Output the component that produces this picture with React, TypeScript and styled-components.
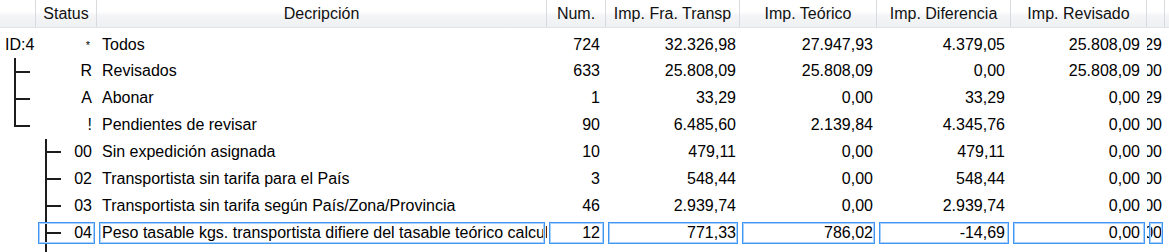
import styled, { createGlobalStyle, css } from "styled-components";

const ROW = 26.85;
const COLS = "36px 61px 450px 59px 134px 137px 134px 136px 18px 1fr";

const GlobalStyle = createGlobalStyle`
  html, body {
    margin: 0;
    padding: 0;
    overflow: hidden;
    background: #ffffff;
  }
  body {
    font-family: "Liberation Sans", Arial, sans-serif;
    font-size: 16px;
    color: #000000;
  }
`;

const Table = styled.div`
  width: 1169px;
  height: 252px;
  overflow: hidden;
  background: #ffffff;
`;

const HeaderRow = styled.div`
  display: grid;
  grid-template-columns: ${COLS};
  height: 28px;
  background: linear-gradient(
    to bottom,
    #ffffff 0%,
    #ffffff 42%,
    #f4f5f7 58%,
    #eff0f2 100%
  );
  border-bottom: 1px solid #e3e4e7;
  box-sizing: border-box;
`;

const HeaderCell = styled.div`
  display: flex;
  align-items: center;
  justify-content: center;
  border-right: 1px solid #dadbde;
  white-space: nowrap;
  overflow: hidden;
  color: #111;

  &:last-child {
    border-right: none;
  }
`;

const Body = styled.div`
  padding-top: 3.6px;
`;

const Row = styled.div`
  display: grid;
  grid-template-columns: ${COLS};
  height: ${ROW}px;
  line-height: ${ROW}px;
`;

type Branch = "tee" | "elbow" | "line";

const lineColor = "#1c1c1c";

const branchBg = (b: Branch, reach: number) => {
  if (b === "tee")
    return css`
      background: linear-gradient(${lineColor}, ${lineColor}) 0 0 / 2px 100%
          no-repeat,
        linear-gradient(${lineColor}, ${lineColor}) 0 50% / ${reach}px 2px
          no-repeat;
    `;
  if (b === "elbow")
    return css`
      background: linear-gradient(${lineColor}, ${lineColor}) 0 0 / 2px
          calc(50% + 1px) no-repeat,
        linear-gradient(${lineColor}, ${lineColor}) 0 50% / ${reach}px 2px
          no-repeat;
    `;
  return css`
    background: linear-gradient(${lineColor}, ${lineColor}) 0 0 / 2px 100%
      no-repeat;
  `;
};

const Connector = styled.span<{ $branch: Branch; $left: number }>`
  flex: none;
  width: 16px;
  margin-left: ${(p) => p.$left}px;
  ${(p) => branchBg(p.$branch, 16)}
`;

const Cell = styled.div<{
  $align?: "left" | "right";
  $pad?: number;
  $selected?: boolean;
}>`
  position: relative;
  display: flex;
  justify-content: ${(p) => (p.$align === "right" ? "flex-end" : "flex-start")};
  padding: ${(p) =>
    p.$align === "right" ? `0 ${p.$pad ?? 5}px 0 0` : "0 0 0 5px"};
  white-space: nowrap;
  overflow: hidden;
  min-width: 0;

  ${(p) =>
    p.$selected &&
    css`
      &::after {
        content: "";
        position: absolute;
        inset: 2px;
        border: 1px solid #3f97f3;
        box-shadow: inset 0 0 0 1px #a9d0f8;
        pointer-events: none;
      }
    `}
`;

const TreeCell = styled.div`
  display: flex;
  align-items: stretch;
  padding-left: 5px;
  white-space: nowrap;
  overflow: hidden;
`;

const StatusCell = styled(Cell)`
  padding: 0 5px 0 0;
  align-items: stretch;
`;

const StatusText = styled.span<{ $mark?: boolean }>`
  margin-left: auto;
  ${(p) =>
    p.$mark &&
    css`
      font-size: 11px;
      line-height: 11px;
      align-self: flex-start;
      margin-top: 8px;
      margin-right: 2px;
    `}
`;

type Item = {
  id?: string;
  top?: Branch;
  sub?: Branch;
  status: string;
  desc: string;
  num: string;
  fra: string;
  teo: string;
  dif: string;
  rev: string;
  extra: string;
  selected?: boolean;
};

const items: Item[] = [
  { id: "ID:4", status: "*", desc: "Todos", num: "724", fra: "32.326,98", teo: "27.947,93", dif: "4.379,05", rev: "25.808,09", extra: "0,29" },
  { top: "tee", status: "R", desc: "Revisados", num: "633", fra: "25.808,09", teo: "25.808,09", dif: "0,00", rev: "25.808,09", extra: "0,00" },
  { top: "tee", status: "A", desc: "Abonar", num: "1", fra: "33,29", teo: "0,00", dif: "33,29", rev: "0,00", extra: "0,29" },
  { top: "elbow", status: "!", desc: "Pendientes de revisar", num: "90", fra: "6.485,60", teo: "2.139,84", dif: "4.345,76", rev: "0,00", extra: "0,00" },
  { sub: "tee", status: "00", desc: "Sin expedición asignada", num: "10", fra: "479,11", teo: "0,00", dif: "479,11", rev: "0,00", extra: "0,00" },
  { sub: "tee", status: "02", desc: "Transportista sin tarifa para el País", num: "3", fra: "548,44", teo: "0,00", dif: "548,44", rev: "0,00", extra: "0,00" },
  { sub: "tee", status: "03", desc: "Transportista sin tarifa según País/Zona/Provincia", num: "46", fra: "2.939,74", teo: "0,00", dif: "2.939,74", rev: "0,00", extra: "0,00" },
  { sub: "tee", status: "04", desc: "Peso tasable kgs. transportista difiere del tasable teórico calculado", num: "12", fra: "771,33", teo: "786,02", dif: "-14,69", rev: "0,00", extra: "0,00", selected: true },
];

const headers = [
  "",
  "Status",
  "Decripción",
  "Num.",
  "Imp. Fra. Transp",
  "Imp. Teórico",
  "Imp. Diferencia",
  "Imp. Revisado",
  "",
  "",
];

export default function App() {
  return (
    <>
      <GlobalStyle />
      <Table>
        <HeaderRow>
          {headers.map((h, i) => (
            <HeaderCell key={i}>{h}</HeaderCell>
          ))}
        </HeaderRow>
        <Body>
          {items.map((it) => (
            <Row key={it.status}>
              <TreeCell>
                {it.id ? it.id : null}
                {it.top ? <Connector $branch={it.top} $left={9} /> : null}
              </TreeCell>
              <StatusCell $selected={it.selected}>
                {it.sub ? <Connector $branch={it.sub} $left={9} /> : null}
                <StatusText $mark={it.status === "*"}>{it.status}</StatusText>
              </StatusCell>
              <Cell $selected={it.selected}>{it.desc}</Cell>
              <Cell $align="right" $pad={6} $selected={it.selected}>{it.num}</Cell>
              <Cell $align="right" $pad={4} $selected={it.selected}>{it.fra}</Cell>
              <Cell $align="right" $pad={4} $selected={it.selected}>{it.teo}</Cell>
              <Cell $align="right" $pad={6} $selected={it.selected}>{it.dif}</Cell>
              <Cell $align="right" $pad={7} $selected={it.selected}>{it.rev}</Cell>
              <Cell $align="right" $pad={3} $selected={it.selected}>{it.extra}</Cell>
              <Cell />
            </Row>
          ))}
          <Row>
            <TreeCell />
            <StatusCell>
              <Connector $branch="line" $left={9} />
            </StatusCell>
          </Row>
        </Body>
      </Table>
    </>
  );
}
